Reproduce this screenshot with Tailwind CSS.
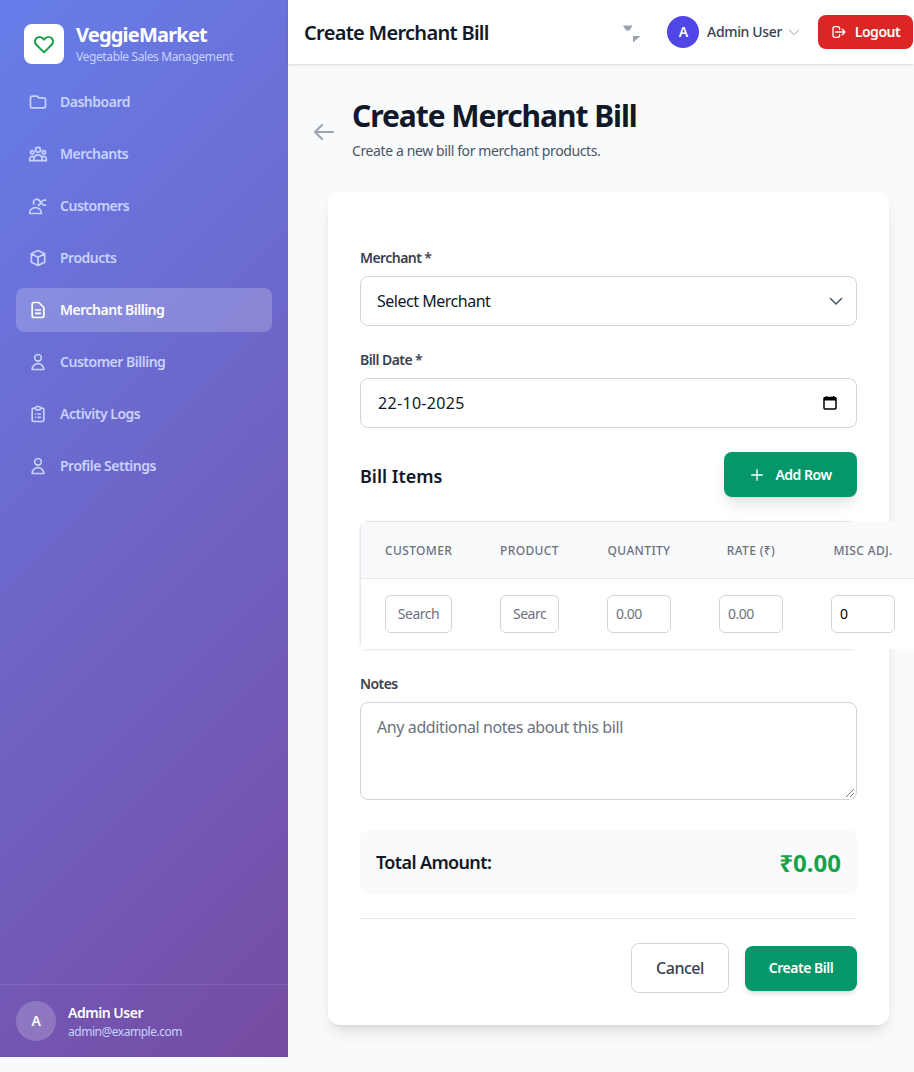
<!DOCTYPE html>
<html lang="en">
<head>
  <meta charset="UTF-8" />
  <meta name="viewport" content="width=device-width, initial-scale=1.0"/>
  <title>Create Merchant Bill</title>
  <script src="https://cdn.jsdelivr.net/npm/@tailwindcss/browser@4"></script>
</head>
<body class="bg-[#f9fafb] text-[#111827] font-['Noto_Sans',sans-serif] tracking-[-0.03em] h-[1072px] w-[914px] overflow-hidden">
  <div class="flex items-start h-[1057px]">

    <!-- Sidebar -->
    <aside class="w-[288px] h-[1057px] shrink-0 flex flex-col bg-[linear-gradient(135deg,#667eea_0%,#764ba2_100%)]">
      <div class="flex items-center gap-3 px-6 pt-[22px]">
        <div class="w-10 h-10 bg-white rounded-lg flex items-center justify-center">
          <svg class="w-6 h-6 text-[#16a34a]" fill="none" stroke="currentColor" stroke-width="2" viewBox="0 0 24 24"><path stroke-linecap="round" stroke-linejoin="round" d="M4.318 6.318a4.5 4.5 0 000 6.364L12 20.364l7.682-7.682a4.5 4.5 0 00-6.364-6.364L12 7.636l-1.318-1.318a4.5 4.5 0 00-6.364 0z"/></svg>
        </div>
        <div>
          <div class="text-xl leading-[26px] font-bold tracking-[-0.04em] text-white">VeggieMarket</div>
          <div class="text-xs leading-4 mt-[1px] tracking-[-0.032em] text-[#c7d2fe]">Vegetable Sales Management</div>
        </div>
      </div>

      <nav class="mt-[15px] px-4 flex flex-col gap-2 text-sm font-semibold tracking-[-0.035em] text-[#c7d2fe]">
        <a class="h-11 px-3 flex items-center gap-3 rounded-lg">
          <svg class="w-5 h-5" fill="none" stroke="currentColor" stroke-width="2" viewBox="0 0 24 24"><path stroke-linecap="round" stroke-linejoin="round" d="M3 7v10a2 2 0 002 2h14a2 2 0 002-2V9a2 2 0 00-2-2h-6l-2-2H5a2 2 0 00-2 2z"/></svg>
          Dashboard
        </a>
        <a class="h-11 px-3 flex items-center gap-3 rounded-lg">
          <svg class="w-5 h-5" fill="none" stroke="currentColor" stroke-width="2" viewBox="0 0 24 24"><path stroke-linecap="round" stroke-linejoin="round" d="M17 20h5v-2a3 3 0 00-5.356-1.857M17 20H7m10 0v-2c0-.656-.126-1.283-.356-1.857M7 20H2v-2a3 3 0 015.356-1.857M7 20v-2c0-.656.126-1.283.356-1.857m0 0a5.002 5.002 0 019.288 0M15 7a3 3 0 11-6 0 3 3 0 016 0zm6 3a2 2 0 11-4 0 2 2 0 014 0zM7 10a2 2 0 11-4 0 2 2 0 014 0z"/></svg>
          Merchants
        </a>
        <a class="h-11 px-3 flex items-center gap-3 rounded-lg">
          <svg class="w-5 h-5" fill="none" stroke="currentColor" stroke-width="2" viewBox="0 0 24 24"><path stroke-linecap="round" stroke-linejoin="round" d="M2 21v-1a7 6 0 0114 0v1H2zM12.500 11.500a4 4 0 10-5.500-2M12.500 5c3 0 3.500 6 6.500 6h2M12.500 11c3 0 3.500-6 6.500-6h2"/></svg>
          Customers
        </a>
        <a class="h-11 px-3 flex items-center gap-3 rounded-lg">
          <svg class="w-5 h-5" fill="none" stroke="currentColor" stroke-width="2" viewBox="0 0 24 24"><path stroke-linecap="round" stroke-linejoin="round" d="M20 7l-8-4-8 4m16 0l-8 4m8-4v10l-8 4m0-10L4 7m8 4v10M4 7v10l8 4"/></svg>
          Products
        </a>
        <a class="h-11 px-3 flex items-center gap-3 rounded-lg bg-white/20 text-white">
          <svg class="w-5 h-5" fill="none" stroke="currentColor" stroke-width="2" viewBox="0 0 24 24"><path stroke-linecap="round" stroke-linejoin="round" d="M9 12h6m-6 4h6m2 5H7a2 2 0 01-2-2V5a2 2 0 012-2h5.586a1 1 0 01.707.293l5.414 5.414a1 1 0 01.293.707V19a2 2 0 01-2 2z"/></svg>
          Merchant Billing
        </a>
        <a class="h-11 px-3 flex items-center gap-3 rounded-lg">
          <svg class="w-5 h-5" fill="none" stroke="currentColor" stroke-width="2" viewBox="0 0 24 24"><path stroke-linecap="round" stroke-linejoin="round" d="M16 7a4 4 0 11-8 0 4 4 0 018 0zM12 14a7 7 0 00-7 7h14a7 7 0 00-7-7z"/></svg>
          Customer Billing
        </a>
        <a class="h-11 px-3 flex items-center gap-3 rounded-lg">
          <svg class="w-5 h-5" fill="none" stroke="currentColor" stroke-width="2" viewBox="0 0 24 24"><path stroke-linecap="round" stroke-linejoin="round" d="M9 5H7a2 2 0 00-2 2v12a2 2 0 002 2h10a2 2 0 002-2V7a2 2 0 00-2-2h-2M9 5a2 2 0 002 2h2a2 2 0 002-2M9 5a2 2 0 012-2h2a2 2 0 012 2m-3 7h3m-3 4h3m-6-4h.01M9 16h.01"/></svg>
          Activity Logs
        </a>
        <a class="h-11 px-3 flex items-center gap-3 rounded-lg">
          <svg class="w-5 h-5" fill="none" stroke="currentColor" stroke-width="2" viewBox="0 0 24 24"><path stroke-linecap="round" stroke-linejoin="round" d="M16 7a4 4 0 11-8 0 4 4 0 018 0zM12 14a7 7 0 00-7 7h14a7 7 0 00-7-7z"/></svg>
          Profile Settings
        </a>
      </nav>

      <div class="mt-auto h-[73px] border-t border-white/10 px-4 flex items-center gap-3">
        <div class="w-10 h-10 rounded-full bg-white/20 flex items-center justify-center text-sm font-semibold text-white">A</div>
        <div>
          <div class="text-sm leading-5 mt-[1px] font-semibold text-white">Admin User</div>
          <div class="text-xs leading-4 mt-[1px] text-[#c7d2fe]">admin@example.com</div>
        </div>
      </div>
    </aside>

    <div class="w-[626px] shrink-0">
      <!-- Topbar -->
      <header class="h-16 bg-white shadow-sm flex items-center pl-4 pr-[1px]">
        <h1 class="text-xl pt-[2px] font-semibold tracking-[-0.035em]">Create Merchant Bill</h1>
        <svg class="ml-auto w-5 h-5 text-[#9ca3af]" viewBox="0 0 20 20" fill="currentColor"><path d="M2 3.500h9.500l-3 5h-3.500z"/><path d="M12 14h7.500l-7.500 6.500z"/></svg>
        <div class="ml-[26px] w-8 h-8 rounded-full bg-[#4f46e5] flex items-center justify-center text-sm font-semibold text-white">A</div>
        <span class="ml-2 text-sm font-medium tracking-[-0.025em] text-[#374151]">Admin User</span>
        <svg class="ml-[4px] w-4 h-4 text-[#9ca3af]" fill="none" stroke="currentColor" stroke-width="1.500" viewBox="0 0 24 24"><path stroke-linecap="round" stroke-linejoin="round" d="M5 9l7 7 7-7"/></svg>
        <button class="ml-[16px] w-[95px] h-[34px] rounded-lg bg-[#dc2626] text-white text-sm font-semibold flex items-center justify-center gap-2">
          <svg class="w-4 h-4" fill="none" stroke="currentColor" stroke-width="2" viewBox="0 0 24 24"><path stroke-linecap="round" stroke-linejoin="round" d="M17 16l4-4m0 0l-4-4m4 4H7m6 4v1a3 3 0 01-3 3H6a3 3 0 01-3-3V7a3 3 0 013-3h4a3 3 0 013 3v1"/></svg>
          Logout
        </button>
      </header>

      <main class="px-6 pt-[32px]">
        <!-- Page title -->
        <div class="flex items-center gap-4">
          <svg class="w-6 h-6 mt-[6px] text-[#9ca3af]" fill="none" stroke="currentColor" stroke-width="2" viewBox="0 0 24 24"><path stroke-linecap="round" stroke-linejoin="round" d="M10 19l-7-7m0 0l7-7m-7 7h18"/></svg>
          <div>
            <h2 class="text-3xl leading-10 font-bold tracking-[-0.035em]">Create Merchant Bill</h2>
            <p class="mt-[5px] text-sm leading-5 tracking-[-0.028em] text-[#4b5563]">Create a new bill for merchant products.</p>
          </div>
        </div>

        <!-- Form card -->
        <div class="mt-[31px] ml-4 w-[561px] h-[833px] bg-white rounded-xl shadow-lg px-8 pt-[56px]">
          <label class="block text-sm leading-5 font-semibold tracking-[-0.04em] text-[#374151]">Merchant *</label>
          <div class="mt-2 h-[50px] border border-[#d1d5db] rounded-lg px-4 flex items-center justify-between text-base">
            Select Merchant
            <svg class="w-5 h-5 text-[#4b5563] -mr-[6px]" fill="none" stroke="currentColor" stroke-width="1.500" viewBox="0 0 20 20"><path stroke-linecap="round" stroke-linejoin="round" d="M4.500 7.500l5.500 5.500 5.500-5.500"/></svg>
          </div>

          <label class="block mt-6 text-sm leading-5 font-semibold tracking-[-0.04em] text-[#374151]">Bill Date *</label>
          <div class="mt-2 h-[50px] border border-[#d1d5db] rounded-lg pl-[17px] pr-[16px] flex items-center justify-between text-base tracking-[0.02em]">
            22-10-2025
            <svg class="w-5 h-5 text-black" viewBox="0 0 20 20" fill="none"><rect x="4" y="4.500" width="12" height="11.500" rx="1" stroke="currentColor" stroke-width="1.500"/><rect x="4" y="4" width="12" height="3.500" fill="currentColor"/><path d="M6.500 3v2M13.500 3v2" stroke="currentColor" stroke-width="1.200"/></svg>
          </div>

          <div class="mt-6 flex items-center justify-between">
            <h3 class="text-lg pt-[2px] font-semibold tracking-normal">Bill Items</h3>
            <button class="w-[133px] h-[45px] rounded-lg bg-[#059669] shadow-lg text-white text-sm font-semibold flex items-center justify-center gap-[10px]">
              <svg class="w-4 h-4" fill="none" stroke="currentColor" stroke-width="2" viewBox="0 0 24 24"><path stroke-linecap="round" stroke-linejoin="round" d="M12 4v16m8-8H4"/></svg>
              Add Row
            </button>
          </div>

          <!-- Items table spills past its wrapper on purpose -->
          <div class="mt-6 w-[497px] h-[128px] rounded-lg border-l border-t border-[#e5e7eb] shadow-sm">
            <table class="w-[558px] table-fixed border-collapse bg-white">
              <thead>
                <tr class="h-[56px] bg-[#f9fafb] border-b border-[#e5e7eb] text-xs uppercase tracking-[0.03em] text-[#6b7280]">
                  <th class="w-[115px] px-6 pt-[2px] text-center font-medium">Customer</th>
                  <th class="w-[107px] px-6 pt-[2px] text-center font-medium">Product</th>
                  <th class="w-[112px] px-6 pt-[2px] text-center font-medium">Quantity</th>
                  <th class="w-[112px] px-6 pt-[2px] text-center font-medium">Rate (₹)</th>
                  <th class="w-[112px] px-6 pt-[2px] text-center font-medium whitespace-nowrap">Misc Adj.</th>
                </tr>
              </thead>
              <tbody>
                <tr class="h-[71px] text-sm">
                  <td class="pl-6"><div class="w-[67px] h-[38px] border border-[#d1d5db] rounded-md flex items-center justify-center text-[#6b7280]">Search</div></td>
                  <td class="pl-6"><div class="w-[59px] h-[38px] border border-[#d1d5db] rounded-md flex items-center pl-3 text-[#6b7280]">Searc</div></td>
                  <td class="pl-6"><div class="w-[64px] h-[38px] border border-[#d1d5db] rounded-md flex items-center pl-2 text-[#6b7280]">0.00</div></td>
                  <td class="pl-6"><div class="w-[64px] h-[38px] border border-[#d1d5db] rounded-md flex items-center pl-2 text-[#6b7280]">0.00</div></td>
                  <td class="pl-6"><div class="w-[64px] h-[38px] border border-[#d1d5db] rounded-md flex items-center pl-2 text-black">0</div></td>
                </tr>
              </tbody>
            </table>
          </div>

          <label class="block mt-[25px] text-sm leading-5 font-semibold tracking-[-0.04em] text-[#374151]">Notes</label>
          <div class="relative mt-2 h-[98px] border border-[#d1d5db] rounded-lg px-4 py-[12px] text-base tracking-[-0.025em] text-[#6b7280]">
            Any additional notes about this bill
            <svg class="absolute right-[1px] bottom-[1px] w-3 h-3 text-[#6b7280]" viewBox="0 0 12 12" stroke="currentColor" fill="none"><path d="M3 11l8-8M7 11l4-4"/></svg>
          </div>

          <div class="mt-[30px] h-16 bg-[#f9fafb] rounded-lg px-4 flex items-center justify-between">
            <span class="text-lg font-semibold tracking-[-0.035em]">Total Amount:</span>
            <span class="text-2xl pt-[2px] font-bold tracking-normal text-[#16a34a]">₹0.00</span>
          </div>

          <div class="mt-6 pt-6 border-t border-[#e5e7eb] flex items-center justify-end gap-4">
            <button class="w-[98px] h-[50px] rounded-lg border border-[#d1d5db] bg-white text-base font-medium text-[#374151]">Cancel</button>
            <button class="w-[112px] h-[45px] rounded-lg bg-[#059669] shadow-md text-white text-sm font-semibold">Create Bill</button>
          </div>
        </div>
      </main>
    </div>
  </div>
</body>
</html>
